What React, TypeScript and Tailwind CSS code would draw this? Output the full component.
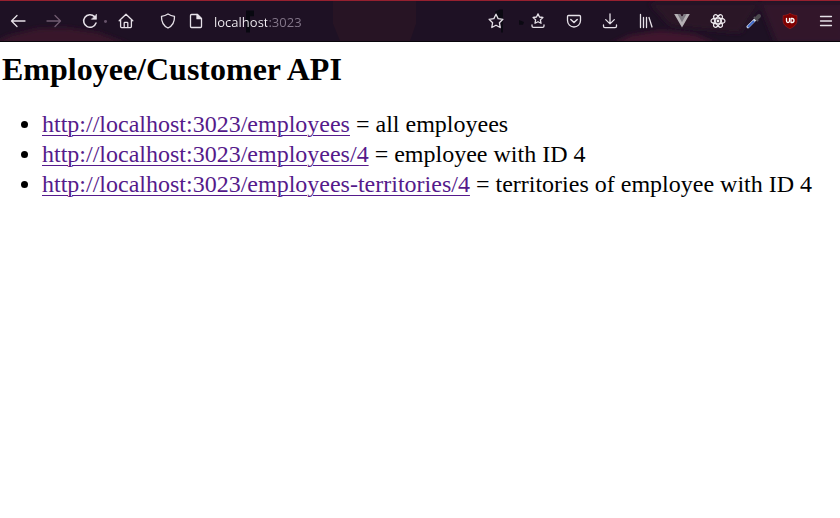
import type { ReactNode } from "react";

const stroke = {
  fill: "none",
  stroke: "currentColor",
  strokeWidth: 1.3,
  strokeLinecap: "round" as const,
  strokeLinejoin: "round" as const,
};

function Icon({ children }: { children: ReactNode }) {
  return (
    <svg viewBox="0 0 16 16" className="size-4 shrink-0" aria-hidden="true" {...stroke}>
      {children}
    </svg>
  );
}

function ToolButton({ label, narrow, disabled, children }: { label: string; narrow?: boolean; disabled?: boolean; children: ReactNode }) {
  return (
    <button
      type="button"
      aria-label={label}
      disabled={disabled}
      className={`${narrow ? "w-7" : "w-9"} flex h-8 shrink-0 items-center justify-center text-[#e6e1e8] disabled:text-[#705b70]`}
    >
      {children}
    </button>
  );
}

function ThemeBackdrop() {
  return (
    <svg viewBox="0 0 840 42" preserveAspectRatio="none" className="absolute inset-0 -z-10 size-full" aria-hidden="true">
      <defs>
        <filter id="soft" x="-20%" y="-50%" width="140%" height="200%">
          <feGaussianBlur stdDeviation="3" />
        </filter>
      </defs>
      <path d="M333 0H416V24L410 42H340L333 24Z" fill="#271424" />
      <g filter="url(#soft)">
        <path d="M-10 46L10 36 38 29 66 28 98 33 130 46Z" fill="#38142b" />
        <path d="M610 46L630 36 660 31 695 35 720 46Z" fill="#40162d" />
        <path d="M650 2L760 2 740 34 670 26Z" fill="#2a1428" />
        <path d="M760 2L845 2V44H776Z" fill="#30142a" />
      </g>
      <path d="M246 10h8v6h-4v17h-4Z" fill="#080810" />
      <path d="M500 9h3v24h-2V18h-6v-7Z" fill="#0b0912" />
      <path d="M519 20l5 2-1 3h-4Z" fill="#0b0912" />
      <circle cx="105.500" cy="21.500" r="1.500" fill="#66536a" />
    </svg>
  );
}

const entries = [
  { url: "http://localhost:3023/employees", text: "all employees" },
  { url: "http://localhost:3023/employees/4", text: "employee with ID 4" },
  { url: "http://localhost:3023/employees-territories/4", text: "territories of employee with ID 4" },
];

const star = "M8 1.200l2.100 4.400 4.800.7-3.500 3.400.8 4.800L8 12.200l-4.200 2.300.8-4.800L1.100 6.300l4.800-.7Z";

export default function App() {
  return (
    <div className="min-h-screen bg-white text-black">
      <header className="relative isolate flex h-[42px] items-center border-t border-b border-t-[#96202f] border-b-[#08050b] bg-[#1e1124]">
        <ThemeBackdrop />
        <nav aria-label="Navigation" className="flex">
          <ToolButton label="Back">
            <Icon><path d="M15 8H1.500M7 2.500L1.500 8 7 13.500" /></Icon>
          </ToolButton>
          <ToolButton label="Forward" disabled>
            <Icon><path d="M1 8h13.500M9 2.500L14.500 8 9 13.500" /></Icon>
          </ToolButton>
          <ToolButton label="Reload">
            <Icon>
              <path d="M14 10A6.300 6.300 0 1 1 12.500 3.600" strokeWidth="1.500" />
              <path d="M14.500 1.500v4.800H9.700Z" fill="currentColor" strokeWidth=".6" />
            </Icon>
          </ToolButton>
          <ToolButton label="Home">
            <Icon>
              <path d="M1.200 7.800L8 1.200l6.800 6.600M2.600 7v6.600c0 .6.400 1 1 1h8.800c.6 0 1-.4 1-1V7" />
              <path d="M6.200 14.300V10c0-.4.300-.7.700-.7h2.200c.4 0 .7.300.7.700v4.300" />
            </Icon>
          </ToolButton>
        </nav>

        <form className="mx-[10px] flex min-w-0 flex-1 items-center" onSubmit={(event) => event.preventDefault()}>
          <ToolButton label="Tracking protection" narrow>
            <Icon><path d="M8 1c2 1.300 4 2 6.500 2.400C14.700 9 12.800 12.600 8 15 3.200 12.600 1.300 9 1.500 3.400 4 3 6 2.300 8 1Z" /></Icon>
          </ToolButton>
          <ToolButton label="Site information" narrow>
            <Icon>
              <path d="M3.500 1.500h6l4 4v8c0 .6-.4 1-1 1h-9c-.6 0-1-.4-1-1v-11c0-.6.400-1 1-1Z" />
              <path d="M9 1.500v4.200h4.200Z" fill="currentColor" />
            </Icon>
          </ToolButton>
          <input
            aria-label="Address"
            defaultValue="localhost:3023"
            spellCheck={false}
            className="h-8 min-w-0 flex-1 bg-[linear-gradient(to_right,#f5f1f6_57px,#85788b_57px)] bg-clip-text pl-1 pt-px font-['Open_Sans',sans-serif] text-[13px] text-transparent outline-none"
          />
          <ToolButton label="Bookmark this page" narrow>
            <Icon><path d={star} /></Icon>
          </ToolButton>
        </form>

        <div className="flex">
          <ToolButton label="Bookmarks">
            <Icon>
              <path d="M8 .9l1.500 3.100 3.400.5-2.500 2.400.6 3.400L8 8.700l-3 1.600.6-3.400-2.500-2.400 3.400-.5Z" />
              <path d="M2 11.800v1.200c0 .8.600 1.400 1.400 1.400h9.200c.8 0 1.400-.6 1.400-1.400v-1.200" />
            </Icon>
          </ToolButton>
          <ToolButton label="Save to Pocket">
            <Icon>
              <path d="M2.500 2.500h11c.6 0 1 .4 1 1v4a6.500 6.500 0 0 1-13 0v-4c0-.6.400-1 1-1Z" />
              <path d="M4.800 6.500L8 9.500l3.200-3" strokeWidth="1.500" />
            </Icon>
          </ToolButton>
          <ToolButton label="Downloads">
            <Icon><path d="M8 .8v10M3.700 6.600L8 10.900l4.300-4.300M1.500 12v1.200c0 .8.600 1.400 1.400 1.400h10.200c.8 0 1.400-.6 1.400-1.400V12" /></Icon>
          </ToolButton>
          <ToolButton label="Library">
            <Icon><path d="M2.500 1.500v13M5.500 4.500v10M8.500 4.500v10M11 4.500l3 9.500" /></Icon>
          </ToolButton>
          <ToolButton label="Vue developer tools">
            <Icon>
              <path d="M.2 1h5.800L8 4.300l2-3.300h5.800L8 14.600Z" fill="#b5b1b5" stroke="none" />
              <path d="M3.400 1H6l2 3.300L10 1h2.600L8 9.300Z" fill="#7d7981" stroke="none" />
            </Icon>
          </ToolButton>
          <ToolButton label="React developer tools">
            <Icon>
              <g strokeWidth="1.200" stroke="#eeeaee">
                <ellipse cx="8" cy="8" rx="7" ry="2.800" />
                <ellipse cx="8" cy="8" rx="7" ry="2.800" transform="rotate(60 8 8)" />
                <ellipse cx="8" cy="8" rx="7" ry="2.800" transform="rotate(120 8 8)" />
              </g>
              <circle cx="8" cy="8" r="1.400" fill="#eeeaee" stroke="none" />
            </Icon>
          </ToolButton>
          <ToolButton label="Colour picker">
            <Icon>
              <path d="M2 13.800L9.500 6.300" stroke="#d3dbe7" strokeWidth="3" />
              <path d="M2.500 13.500L7.500 8.500" stroke="#4169c8" strokeWidth="2" />
              <path d="M8.500 4.500l3 3" stroke="#55535a" strokeWidth="2" />
              <path d="M10.800 5.200l2.200-2.200" stroke="#4d4b50" strokeWidth="4" />
            </Icon>
          </ToolButton>
          <ToolButton label="uBlock Origin">
            <Icon>
              <path d="M8 .3c2 1.300 4.300 2 7 2.200v5.200c0 3.800-3.200 6.200-7 8-3.800-1.800-7-4.200-7-8V2.500C3.700 2.300 6 1.600 8 .3Z" fill="#800000" stroke="#a33" strokeWidth=".4" />
              <path d="M4.500 5.500v2.500a1.500 1.500 0 0 0 3 0V5.500" stroke="#fff" strokeWidth="1.300" />
              <path d="M9 5.500h1a2 2 0 0 1 0 4H9Z" stroke="#fff" strokeWidth="1.300" />
            </Icon>
          </ToolButton>
          <div className="ml-1 flex">
            <ToolButton label="Open application menu" narrow>
              <Icon><path d="M2.500 3.500h11M2.500 8h11M2.500 12.500h11" /></Icon>
            </ToolButton>
          </div>
        </div>
      </header>

      <main className="px-[2px] pt-[7px] font-['Liberation_Serif',serif]">
        <h1 className="text-[32px] leading-10 font-bold">Employee/Customer API</h1>
        <ul className="mt-5 list-disc pl-10 text-2xl leading-[30px]">
          {entries.map((entry) => (
            <li key={entry.url}>
              <a href={entry.url} className="text-[#551a8b] underline decoration-1 underline-offset-3">{entry.url}</a> = {entry.text}
            </li>
          ))}
        </ul>
      </main>
    </div>
  );
}
